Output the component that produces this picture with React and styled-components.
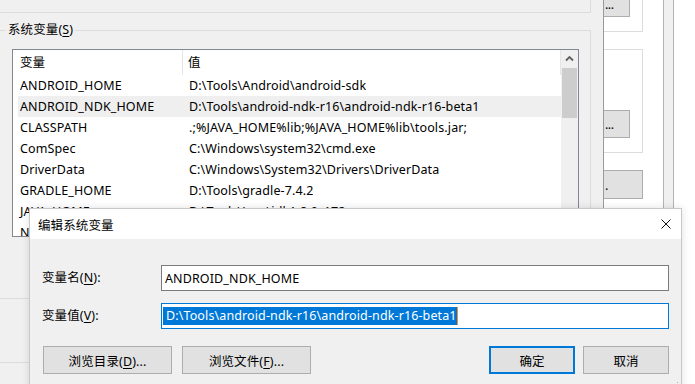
import React from "react";
import styled, { createGlobalStyle } from "styled-components";

const rows = [
  { name: "ANDROID_HOME", value: "D:\\Tools\\Android\\android-sdk" },
  { name: "ANDROID_NDK_HOME", value: "D:\\Tools\\android-ndk-r16\\android-ndk-r16-beta1", selected: true },
  { name: "CLASSPATH", value: ".;%JAVA_HOME%lib;%JAVA_HOME%lib\\tools.jar;" },
  { name: "ComSpec", value: "C:\\Windows\\system32\\cmd.exe" },
  { name: "DriverData", value: "C:\\Windows\\System32\\Drivers\\DriverData" },
  { name: "GRADLE_HOME", value: "D:\\Tools\\gradle-7.4.2" },
  { name: "JAVA_HOME", value: "D:\\Tools\\Java\\jdk1.8.0_172" },
  { name: "NUMBER_OF_PROCESSORS", value: "8" },
];

function App() {
  return (
    <>
      <GlobalStyle />
      <Desktop>
        <EnvWindow>
          <UserGroupTail />
          <SysGroup>
            <Legend>
              系统变量(<u>S</u>)
            </Legend>
            <ListBox>
              <ListBody>
                <Header>
                  <HeadCell width="165px" divider>变量</HeadCell>
                  <HeadCell pad="5px">值</HeadCell>
                </Header>
                {rows.map((row) => (
                  <Row key={row.name} selected={row.selected}>
                    <NameCell>{row.name}</NameCell>
                    <ValueCell>{row.value}</ValueCell>
                  </Row>
                ))}
              </ListBody>
              <ScrollBar>
                <ScrollArrow>
                  <svg width="9" height="7" viewBox="0 0 9 7">
                    <path d="M1 5.5 L4.5 2 L8 5.5" fill="none" stroke="#606060" strokeWidth="1.8" />
                  </svg>
                </ScrollArrow>
                <Thumb />
              </ScrollBar>
            </ListBox>
          </SysGroup>
          <BottomLine />
        </EnvWindow>

        <BackWindow>
          <TabPage>
            <PageGroup height="32px" open>
              <SideButton top="-9px" height="26px" width="26px">...</SideButton>
            </PageGroup>
            <PageGroup height="104px" gap="17px">
              <SideButton top="60px" height="28px" width="26px">...</SideButton>
            </PageGroup>
            <SideButton top="17px" height="29px" width="39px">.</SideButton>
          </TabPage>
          <FrameStrip />
          <Outside />
        </BackWindow>

        <Dialog>
          <TitleBar>
            <span>编辑系统变量</span>
            <svg width="10" height="10" viewBox="0 0 10 10">
              <path d="M0.5 0.5 L9.5 9.5 M9.5 0.5 L0.5 9.5" stroke="#111" strokeWidth="1" />
            </svg>
          </TitleBar>
          <DialogBody>
            <Form>
              <FieldLabel>
                变量名(<u>N</u>):
              </FieldLabel>
              <TextBox>ANDROID_NDK_HOME</TextBox>
              <FieldLabel>
                变量值(<u>V</u>):
              </FieldLabel>
              <TextBox focused>
                <Selection>D:\Tools\android-ndk-r16\android-ndk-r16-beta1</Selection>
                <Caret />
              </TextBox>
            </Form>
            <ButtonRow>
              <ButtonGroup gap="10px">
                <Button width="129px">
                  浏览目录(<u>D</u>)...
                </Button>
                <Button width="129px">
                  浏览文件(<u>F</u>)...
                </Button>
              </ButtonGroup>
              <ButtonGroup gap="8px" right>
                <Button width="86px" primary>确定</Button>
                <Button width="86px">取消</Button>
              </ButtonGroup>
            </ButtonRow>
          </DialogBody>
          <Grip width="8" height="8" viewBox="0 0 8 8">
            <rect x="6" y="2" width="1" height="1" fill="#b0b0b0" />
            <rect x="6" y="5" width="1" height="1" fill="#b0b0b0" />
            <rect x="3" y="5" width="1" height="1" fill="#b0b0b0" />
          </Grip>
        </Dialog>
      </Desktop>
    </>
  );
}

export default App;

const uiFont = `"Noto Sans", "Noto Sans CJK SC", sans-serif`;

const GlobalStyle = createGlobalStyle`
  html, body {
    margin: 0;
    padding: 0;
  }
  body {
    width: 695px;
    height: 384px;
    overflow: hidden;
    background: #f0f0f0;
    font-family: ${uiFont};
    font-size: 12.5px;
    letter-spacing: 0.12px;
    color: #000;
  }
  u {
    text-decoration-thickness: 1px;
    text-underline-offset: 2px;
  }
`;

const Desktop = styled.div`
  position: relative;
  display: flex;
  width: 695px;
  height: 384px;
  overflow: hidden;
`;

const EnvWindow = styled.div`
  width: 604px;
  flex-shrink: 0;
  box-sizing: border-box;
  border-right: 1px solid #9a9a9a;
  background: #f0f0f0;
  display: flex;
  flex-direction: column;
`;

const UserGroupTail = styled.div`
  width: 591px;
  height: 13px;
  box-sizing: border-box;
  border-right: 1px solid #dcdcdc;
  border-bottom: 1px solid #dcdcdc;
`;

const SysGroup = styled.fieldset`
  margin: 9px 0 0 0;
  padding: 0;
  width: 591px;
  height: 277px;
  min-width: 0;
  box-sizing: border-box;
  border: 1px solid #dcdcdc;
  border-left: none;
`;

const Legend = styled.legend`
  margin-left: 6px;
  padding: 0 2px;
  line-height: 16px;
`;

const ListBox = styled.div`
  margin: 11px 0 0 12px;
  width: 567px;
  height: 188px;
  box-sizing: border-box;
  border: 1px solid #828790;
  background: #fff;
  display: flex;
  overflow: hidden;
`;

const ListBody = styled.div`
  width: 548px;
  flex-shrink: 0;
  overflow: hidden;
`;

const Header = styled.div`
  display: flex;
  height: 25px;
  box-sizing: border-box;
  border-right: 1px solid #e5e5e5;
  padding-left: 5px;
`;

const HeadCell = styled.div`
  width: ${({ width }) => width || "auto"};
  box-sizing: border-box;
  padding-left: ${({ pad }) => pad || "2px"};
  line-height: 25px;
  border-right: ${({ divider }) => (divider ? "1px solid #e5e5e5" : "none")};
`;

const Row = styled.div`
  display: flex;
  margin-left: 5px;
  width: 543px;
  height: 21px;
  line-height: 21px;
  white-space: nowrap;
  background: ${({ selected }) => (selected ? "#efefef" : "transparent")};
`;

const NameCell = styled.div`
  width: 168px;
  flex-shrink: 0;
  padding-left: 2px;
`;

const ValueCell = styled.div`
  padding-left: 1px;
  overflow: hidden;
`;

const ScrollBar = styled.div`
  width: 17px;
  flex-shrink: 0;
  background: #f0f0f0;
  display: flex;
  flex-direction: column;
  align-items: center;
`;

const ScrollArrow = styled.div`
  height: 17px;
  width: 17px;
  display: flex;
  align-items: center;
  justify-content: center;
`;

const Thumb = styled.div`
  margin-top: 1px;
  width: 15px;
  height: 50px;
  background: #cdcdcd;
`;

const BottomLine = styled.div`
  margin-top: 63px;
  height: 1px;
  width: 591px;
  background: #dcdcdc;
`;

const BackWindow = styled.div`
  flex: 1;
  display: flex;
  background: #fff;
`;

const TabPage = styled.div`
  width: 59px;
  background: #fff;
  display: flex;
  flex-direction: column;
  overflow: hidden;
`;

const PageGroup = styled.div`
  width: 39px;
  height: ${({ height }) => height};
  margin-top: ${({ gap }) => gap || "0"};
  box-sizing: border-box;
  border: 1px solid #dcdcdc;
  border-left: none;
  border-top: ${({ open }) => (open ? "none" : "1px solid #dcdcdc")};
  flex-shrink: 0;
`;

const SideButton = styled.div`
  margin-top: ${({ top }) => top};
  width: ${({ width }) => width};
  height: ${({ height }) => height};
  box-sizing: border-box;
  border: 1px solid #adadad;
  border-left: none;
  background: #e1e1e1;
  line-height: ${({ height }) => height};
  padding-left: 1px;
  flex-shrink: 0;
  letter-spacing: -0.5px;
`;

const FrameStrip = styled.div`
  width: 11px;
  box-sizing: border-box;
  border-left: 1px solid #b4b4b4;
  border-right: 1px solid #b4b4b4;
  background: #f0f0f0;
`;

const Outside = styled.div`
  flex: 1;
  background: #fff;
`;

const Dialog = styled.div`
  position: absolute;
  left: 29px;
  top: 208px;
  width: 653px;
  height: 183px;
  box-sizing: border-box;
  border: 1px solid #c8c8c8;
  background: #f0f0f0;
  box-shadow: 0 0 8px rgba(0, 0, 0, 0.12);
`;

const TitleBar = styled.div`
  height: 30px;
  background: #fff;
  display: flex;
  align-items: center;
  justify-content: space-between;
  padding: 0 10px 0 8px;
`;

const DialogBody = styled.div`
  padding: 26px 0 0 12px;
`;

const Form = styled.div`
  display: grid;
  grid-template-columns: 119px 508px;
  row-gap: 12px;
  align-items: center;
`;

const FieldLabel = styled.div`
  line-height: 26px;
`;

const TextBox = styled.div`
  display: flex;
  align-items: center;
  height: 26px;
  box-sizing: border-box;
  border: 1px solid ${({ focused }) => (focused ? "#0078d7" : "#7a7a7a")};
  background: #fff;
  padding-left: ${({ focused }) => (focused ? "1px" : "3px")};
  white-space: nowrap;
`;

const Selection = styled.span`
  background: #0078d7;
  color: #fff;
  line-height: 18px;
  padding: 0 0 0 3px;
`;

const Caret = styled.span`
  width: 1px;
  height: 18px;
  background: #ff8a28;
`;

const ButtonRow = styled.div`
  display: flex;
  width: 626px;
  margin: 17px 0 0 1px;
`;

const ButtonGroup = styled.div`
  display: flex;
  gap: ${({ gap }) => gap};
  margin-left: ${({ right }) => (right ? "auto" : "0")};
`;

const Button = styled.button`
  width: ${({ width }) => width};
  height: 28px;
  box-sizing: border-box;
  padding: 0;
  border: ${({ primary }) => (primary ? "2px solid #0078d7" : "1px solid #adadad")};
  background: #e1e1e1;
  font-family: ${uiFont};
  font-size: 12.5px;
  letter-spacing: 0.12px;
  color: #000;
`;

const Grip = styled.svg`
  position: absolute;
  right: 2px;
  bottom: 2px;
`;
